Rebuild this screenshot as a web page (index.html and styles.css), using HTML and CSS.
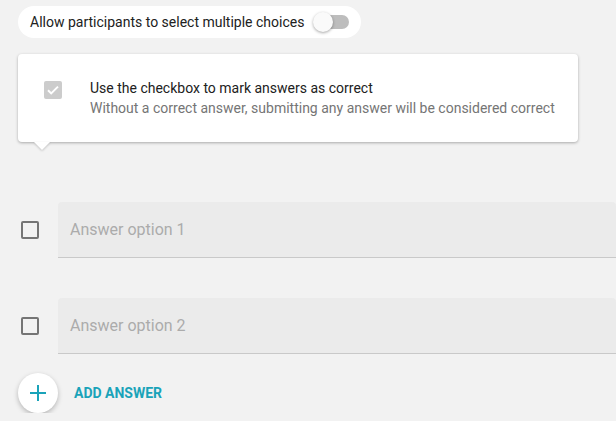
FILE: index.html
```html
<!DOCTYPE html>
<html lang="en">
<head>
  <meta charset="UTF-8">
  <meta name="viewport" content="width=device-width, initial-scale=1.0">
  <title>Multiple choice answers</title>
  <link rel="stylesheet" href="styles.css">
</head>
<body>
  <div class="toggle-row">
    <span>Allow participants to select multiple choices</span>
    <span class="switch"><span class="switch-track"></span><span class="switch-knob"></span></span>
  </div>

  <div class="hint">
    <span class="checkbox checked">
      <svg viewBox="0 0 18 18" width="18" height="18"><path d="M4 9.2l3.2 3.2L14 5.6" fill="none" stroke="#fff" stroke-width="2"/></svg>
    </span>
    <div class="hint-text">
      <div class="hint-title">Use the checkbox to mark answers as correct</div>
      <div class="hint-sub">Without a correct answer, submitting any answer will be considered correct</div>
    </div>
  </div>

  <div class="answers">
    <div class="answer">
      <span class="checkbox"></span>
      <div class="field">Answer option 1</div>
    </div>
    <div class="answer">
      <span class="checkbox"></span>
      <div class="field">Answer option 2</div>
    </div>
  </div>

  <div class="add-row">
    <button class="fab">
      <svg viewBox="0 0 16 16" width="16" height="16"><path d="M8 0v16M0 8h16" stroke="#1aa3b9" stroke-width="2"/></svg>
    </button>
    <span class="add-label">ADD ANSWER</span>
  </div>
</body>
</html>
```

FILE: styles.css
```css
body {
  margin: 0;
  background-color: #f2f2f2;
  font-family: Roboto, "Liberation Sans", sans-serif;
  color: #212121;
}
.toggle-row {
  display: inline-flex;
  align-items: center;
  height: 32px;
  margin: 6px 0 0 18px;
  padding: 0 12px;
  background-color: white;
  border-radius: 16px;
  font-size: 14px;
}
.switch {
  position: relative;
  display: inline-block;
  width: 36px;
  height: 20px;
  margin-left: 9px;
}
.switch-track {
  position: absolute;
  left: 8px;
  right: 0;
  top: 3px;
  height: 14px;
  border-radius: 7px;
  background-color: #bdbdbd;
}
.switch-knob {
  position: absolute;
  left: 0;
  top: 0;
  width: 20px;
  height: 20px;
  border-radius: 50%;
  background-color: #fafafa;
  box-shadow: 0 1px 3px rgba(0, 0, 0, 0.35);
}
.hint {
  position: relative;
  display: flex;
  align-items: flex-start;
  gap: 28px;
  width: 534px;
  margin: 16px 0 0 18px;
  padding: 24px 0 24px 26px;
  background-color: white;
  border-radius: 4px;
  box-shadow: 0 1px 3px rgba(0, 0, 0, 0.3);
}
.hint::after {
  content: "";
  position: absolute;
  left: 16px;
  bottom: -8px;
  border-left: 8px solid transparent;
  border-right: 8px solid transparent;
  border-top: 8px solid white;
  filter: drop-shadow(0 1px 1px rgba(0, 0, 0, 0.2));
}
.hint .checkbox {
  margin-top: 3px;
}
.hint-text {
  font-size: 14px;
  line-height: 20px;
}
.hint-sub {
  color: #757575;
}
.checkbox {
  display: inline-block;
  box-sizing: border-box;
  flex: none;
  width: 18px;
  height: 18px;
  border: 2px solid #757575;
  border-radius: 2px;
}
.checkbox.checked {
  border: none;
  background-color: #cccccc;
}
.checkbox svg {
  display: block;
}
.answers {
  display: flex;
  flex-direction: column;
  gap: 40px;
  margin-top: 60px;
}
.answer {
  display: flex;
  align-items: center;
  gap: 19px;
  padding-left: 21px;
}
.field {
  flex: 1;
  height: 55px;
  line-height: 55px;
  padding-left: 12px;
  background-color: #ebebeb;
  border-bottom: 1px solid #c9c9c9;
  border-radius: 4px 4px 0 0;
  font-size: 16px;
  color: #ababab;
}
.add-row {
  display: flex;
  align-items: center;
  gap: 16px;
  margin: 19px 0 0 18px;
}
.fab {
  display: flex;
  align-items: center;
  justify-content: center;
  width: 40px;
  height: 40px;
  padding: 0;
  border: none;
  border-radius: 50%;
  background-color: white;
  box-shadow: 0 2px 5px rgba(0, 0, 0, 0.25);
}
.add-label {
  font-size: 14px;
  font-weight: bold;
  color: #1aa3b9;
}
```
